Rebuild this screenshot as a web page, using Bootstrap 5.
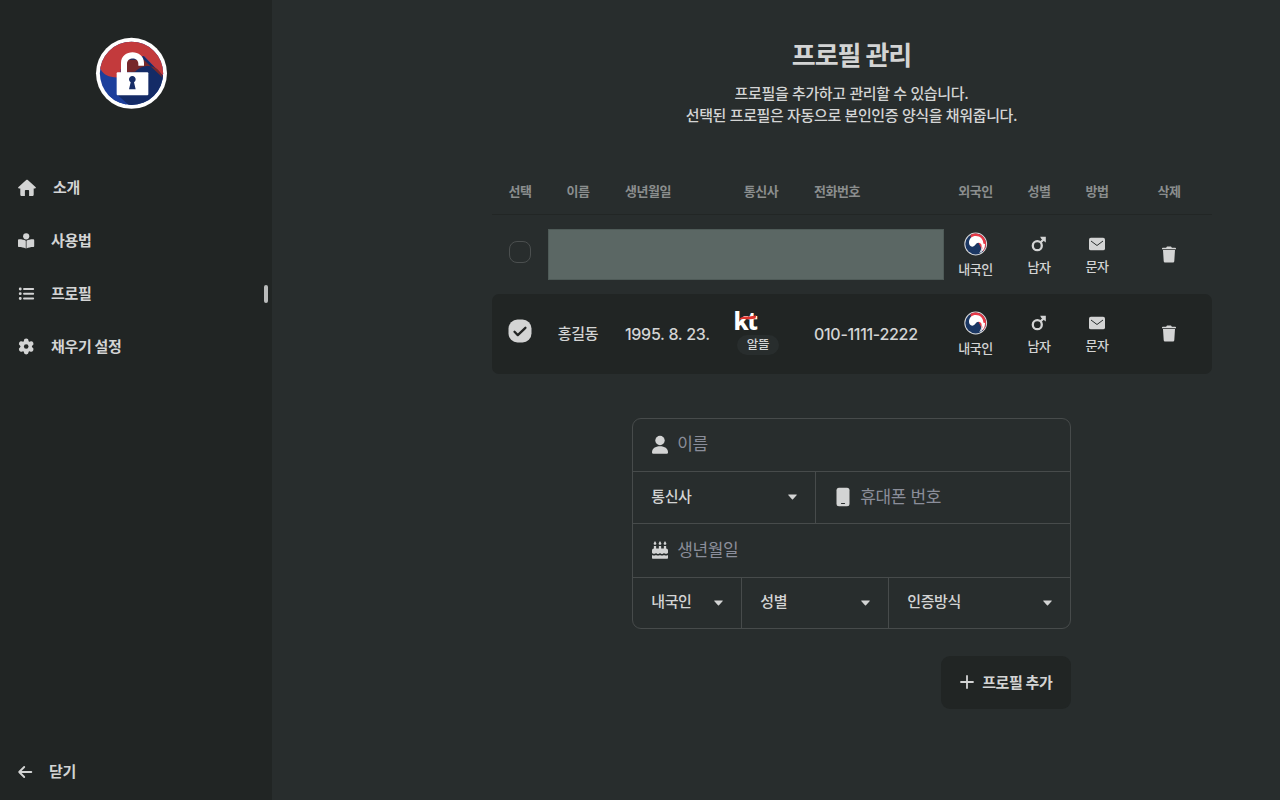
<!DOCTYPE html>
<html lang="ko" data-bs-theme="dark">
<head>
<meta charset="utf-8">
<meta name="viewport" content="width=device-width, initial-scale=1">
<title>프로필 관리</title>
<link rel="stylesheet" href="https://cdn.jsdelivr.net/npm/bootstrap@5.3.0/dist/css/bootstrap.min.css">
<style>
:root{--side:#212524;--page:#282d2d;--ink:#d3d4d4;--line:#474b4b}
body{background:var(--page);color:var(--ink);font-family:Inter,"Noto Sans CJK KR",sans-serif;font-size:15px;letter-spacing:-.25px}
svg{display:block;flex:none}
.sidebar{width:272px;background:var(--side)}
.logo{margin:28px 0 0 86px}
.side-nav{margin-top:41px}
.side-nav .nav-link,.close-link{height:53px;padding:0 4px 0 16px;color:var(--ink);font-weight:700;letter-spacing:-.35px;gap:13px}
.side-nav span,.close-link span{padding-top:2px}
.marker{width:4px;height:18px;border-radius:2px;background:#b9bbbb}
.content{padding-left:152px}
h1{font-size:26px;font-weight:700;letter-spacing:-1.05px;line-height:30px;margin:41px 1px 12px 0;color:var(--ink)}
.intro{line-height:22px;margin:0 1px 0 0;font-weight:500;letter-spacing:-.36px}
.profiles{width:720px;margin:46px 0 0;table-layout:fixed;border-collapse:separate;border-spacing:0}
.profiles th{height:42px;padding:0 0 3px;font-size:13px;font-weight:700;letter-spacing:-.45px;color:#8b8e8e;vertical-align:middle;border-bottom:1px solid #222625}
.profiles td{height:79.3px;padding:0;vertical-align:middle}
.picked td{background:var(--side)}
.picked td:first-child{border-radius:7px 0 0 7px}
.picked td:last-child{border-radius:0 7px 7px 0}
.profiles .ps{padding-left:17px}
.profiles .person{font-weight:500}
.profiles .digits{font-size:16px;font-weight:500;letter-spacing:-.3px;padding-top:1px}
.hidden-data{width:395.5px;height:51px;margin-top:-1px;background:#5b6764;border:1px solid #4f5b58}
.tick{width:22px;height:22px;border:1px solid #4b4f4f;border-radius:8px;margin:-5px auto 0}
.profiles .tagline{font-size:13px;line-height:18px;font-weight:500;letter-spacing:-.5px}
.profiles .low{padding:2px 0 0}
.low svg{margin-bottom:6px}
.kt{position:relative;width:24px;height:20px;margin:-2px 0 0 10px;font:800 24px/20px "Noto Sans",sans-serif;letter-spacing:-1.5px;color:#fff}
.kt svg{position:absolute;left:6px;top:3px}
.chip{width:42px;height:20px;border-radius:10px;background:var(--page);margin:4px 0 0 14px;font-size:12.5px;line-height:20px;letter-spacing:-.2px;text-align:center;font-weight:500}
.profile-form{width:439px;height:211px;margin-top:44px;border:1.4px solid var(--line);border-radius:9px;display:grid;grid-template-rows:52px 52px 54px 1fr}
.profile-form>div+div{border-top:1px solid var(--line)}
.field{padding:0 18px;min-width:0}
.field+.field{border-left:1px solid var(--line)}
.field input{background:none;border:0;outline:0;padding:0;color:var(--ink);font-size:17px;letter-spacing:-.4px;width:100%;min-width:0;margin-left:8px;height:30px;margin-top:-1px}
.field input::placeholder{color:#8b8e9a;opacity:1}
.pick{font-weight:500;letter-spacing:-.4px}
.add{width:130px;height:53px;margin-top:27px;border-radius:9px;background:var(--side);color:var(--ink);font-size:15px;font-weight:700;letter-spacing:-.4px;border:0;gap:8px}
.add span{padding-top:2px}
</style>
</head>
<body>
<svg width="0" height="0" class="position-absolute" aria-hidden="true">
<defs>
<symbol id="taegeuk" viewBox="0 0 24 24"><circle cx="11.700" cy="12" r="11.400" fill="#d9dadb"/><circle cx="11.700" cy="12" r="10.400" fill="#1b3763"/><path d="M6.500 3A10.400 10.400 0 0 1 19 19.400L14 10 7 6Z" fill="#e63946"/><path d="M5 10.800C5 6.500 8 4 11.800 4c4.700 0 7.600 3.400 7.600 7.800 0 3.500-1.500 6.300-3.600 8.400C18.500 16 18.500 10.800 14.500 10.800c-2.900 0-3.300 3.900-6.300 3.900C6.400 14.700 5 13 5 10.800Z" fill="#fff"/><path d="M18.500 11.500c1.200 3.500 0 6.500-3.500 9.300l2-.5c3-2.200 4-4.800 4-8.300Z" fill="#fff"/></symbol>
<symbol id="male" viewBox="0 0 16 16"><g fill="none" stroke="#d3d4d4" stroke-width="2.300"><circle cx="6.300" cy="9.700" r="4.500"/><path d="m9.500 6.500 3.500-3.500"/></g><path d="M9.200.8h5.600v5.600l-2-1.300-2.700-2.600Z" fill="#d3d4d4"/></symbol>
<symbol id="mail" viewBox="0 0 16 14"><rect y=".7" width="16" height="12.600" rx="1.900" fill="#d3d4d4"/><path d="m2 4 6 4.500L14 4" fill="none" stroke="#292e2e" stroke-width="1"/></symbol>
<symbol id="trash" viewBox="0 0 14 17"><path d="M.8 1.800h3.300L5 .5h4l.9 1.300h3.300c.5 0 .8.300.8.700v.7H0v-.7c0-.4.300-.7.800-.7ZM1 4h12l-.7 11c-.1 1-.7 1.500-1.600 1.500H3.300c-.9 0-1.500-.5-1.600-1.500Z" fill="#d3d4d4"/></symbol>
<symbol id="caret" viewBox="0 0 9 6"><path d="M.7.5h7.600c.5 0 .6.400.3.700L5 5.200c-.3.300-.7.300-1 0L.4 1.200C.1.900.2.500.7.500Z" fill="#d3d4d4"/></symbol>
</defs>
</svg>

<div class="d-flex vh-100 overflow-hidden">
  <aside class="sidebar d-flex flex-column">
    <svg class="logo" width="92" height="92" viewBox="0 0 276 276">
      <defs><clipPath id="disc"><circle cx="136.500" cy="136" r="95"/></clipPath></defs>
      <circle cx="136.500" cy="136" r="106.500" fill="#fff"/>
      <g clip-path="url(#disc)">
        <rect width="276" height="276" fill="#1d3f9c"/>
        <path d="M120 85h53l64 64v90h-100l-43-39 50-84Z" fill="#142b66"/>
        <path d="M30 118C54 40 91 30 136 30c53 0 100 34 106 92l-12 20-56-58-54 10-16 30-1 24C70 150 54 142 44 124Z" fill="#c33a3c"/>
        <path d="M120 95h53l58 55c-9-27-29-39-54-35-12 2-21 8-30 16l-27 2Z" fill="#76282b"/>
        <path d="m92 201 38 38H90l-34-43Z" fill="#1d3f9c"/>
      </g>
      <path d="M105 135v-30c0-43 69-43 69 0v8h-17v-6c0-21-34-21-34 0v28Z" fill="#fff"/>
      <rect x="92" y="133" width="95" height="69" rx="3" fill="#fff"/>
      <path d="M134 163a10 10 0 1 1 10 0l5 21h-20Z" fill="#172d67"/>
    </svg>
    <nav class="nav flex-column side-nav">
      <a class="nav-link d-flex align-items-center" href="#"><svg width="22" height="22" viewBox="0 0 22 22" fill="#d3d4d4"><path d="M10.200 3.100c.5-.5 1.100-.5 1.600 0l7.700 7c.8.700.3 1.300-.6 1.300h-1.200v6c0 1-.6 1.600-1.600 1.600h-3V14c0-.7-.4-1-1-1H9.900c-.6 0-1 .3-1 1v5h-3c-1 0-1.600-.6-1.600-1.600v-6H3.100c-.9 0-1.400-.6-.6-1.300Z"/></svg><span class="ps-1" style="margin-left:-2px">소개</span></a>
      <a class="nav-link d-flex align-items-center" href="#"><svg width="22" height="22" viewBox="0 0 22 22" fill="#d3d4d4"><circle cx="10.200" cy="6.300" r="3.100"/><path d="M2 10.300c0-.7.500-1 1.200-1 2.800 0 5 .5 6.600 1.500v7.600c-2.200-1-4.200-1.500-6.800-1.500-.6 0-1-.4-1-1Zm16.200 0c0-.7-.5-1-1.200-1-2.800 0-4.900.5-6.500 1.500v7.600c2.100-1 4.100-1.500 6.700-1.500.6 0 1-.4 1-1Z"/></svg><span>사용법</span></a>
      <a class="nav-link d-flex align-items-center" href="#"><svg width="22" height="22" viewBox="0 0 22 22" fill="none" stroke="#d3d4d4" stroke-linecap="round"><path stroke-width="1.900" d="M8 6h9.200M8 10.700h9.200M8 15.500h9.200"/><path stroke-width="2.800" d="M4.200 6h.1M4.200 10.700h.1M4.200 15.500h.1"/></svg><span>프로필</span><i class="marker ms-auto"></i></a>
      <a class="nav-link d-flex align-items-center" href="#"><svg width="22" height="22" viewBox="0 0 22 22"><g transform="translate(10.200 10.500)"><g stroke="#d3d4d4" stroke-width="4.800" stroke-linejoin="round" stroke-linecap="round"><path d="M0-5.600V5.600M-4.900-2.800 4.900 2.800M-4.900 2.800 4.900-2.800"/></g><circle r="5.700" fill="#d3d4d4"/><circle r="2.300" fill="#222524"/></g></svg><span>채우기 설정</span></a>
    </nav>
    <a class="close-link d-flex align-items-center mt-auto text-decoration-none" style="margin-bottom:2px" href="#"><svg width="20" height="22" viewBox="0 0 20 22" fill="none" stroke="#d3d4d4" stroke-width="1.900" stroke-linecap="round" stroke-linejoin="round"><path d="M15.300 11H3.200m5-5-5 5 5 5"/></svg><span>닫기</span></a>
  </aside>

  <main class="content flex-fill d-flex flex-column align-items-center">
    <h1>프로필 관리</h1>
    <p class="intro text-center">프로필을 추가하고 관리할 수 있습니다.<br>선택된 프로필은 자동으로 본인인증 양식을 채워줍니다.</p>

    <table class="profiles text-center">
      <colgroup><col style="width:56px"><col style="width:60px"><col style="width:115px"><col style="width:76px"><col style="width:142px"><col style="width:69px"><col style="width:58px"><col style="width:58px"><col style="width:86px"></colgroup>
      <thead><tr><th>선택</th><th>이름</th><th class="ps text-start">생년월일</th><th>통신사</th><th class="text-start" style="padding-left:15px">전화번호</th><th>외국인</th><th>성별</th><th>방법</th><th>삭제</th></tr></thead>
      <tbody>
        <tr>
          <td><div class="tick"></div></td>
          <td colspan="4"><div class="hidden-data"></div></td>
          <td class="tagline"><svg class="mx-auto mb-1" width="24" height="24"><use href="#taegeuk"/></svg>내국인</td>
          <td class="tagline low"><svg class="mx-auto" width="16" height="16"><use href="#male"/></svg>남자</td>
          <td class="tagline low"><svg class="mx-auto" width="16" height="14"><use href="#mail"/></svg>문자</td>
          <td><svg class="mx-auto" width="14" height="17"><use href="#trash"/></svg></td>
        </tr>
        <tr class="picked">
          <td><svg class="mx-auto" style="margin-top:-5px" width="24" height="24" viewBox="0 0 24 24"><rect x=".5" y=".5" width="23" height="23" rx="9" fill="#d3d4d4"/><path d="m6.500 12.800 3.300 3.300 7.600-7.300" fill="none" stroke="#222524" stroke-width="2.300" stroke-linecap="round" stroke-linejoin="round"/></svg></td>
          <td class="person">홍길동</td>
          <td class="ps digits text-start">1995. 8. 23.</td>
          <td><div class="kt">kt<svg width="18" height="7" viewBox="0 0 18 7"><path d="M.5 4.800C3.500 1.300 7 2.700 10 2.500c2.800-.1 4.500-.6 7.300-1.200L16.500 4.600C12 5.800 9 5 5.500 5 3.500 5 2 5.200.3 6Z" fill="#e0352f"/></svg></div><div class="chip">알뜰</div></td>
          <td class="digits text-start" style="padding-left:15px">010-1111-2222</td>
          <td class="tagline"><svg class="mx-auto mb-1" width="24" height="24"><use href="#taegeuk"/></svg>내국인</td>
          <td class="tagline low"><svg class="mx-auto" width="16" height="16"><use href="#male"/></svg>남자</td>
          <td class="tagline low"><svg class="mx-auto" width="16" height="14"><use href="#mail"/></svg>문자</td>
          <td><svg class="mx-auto" width="14" height="17"><use href="#trash"/></svg></td>
        </tr>
      </tbody>
    </table>

    <form class="d-flex flex-column align-items-end" style="margin-right:.4px">
      <div class="profile-form">
        <div class="field d-flex align-items-center"><svg width="18" height="20" viewBox="0 0 18 20" fill="#d3d4d4"><circle cx="9" cy="5.500" r="4.700"/><path d="M1 17.500c0-4 3.300-6.200 8-6.200s8 2.200 8 6.200c0 .8-.5 1.200-1.200 1.200H2.200c-.7 0-1.200-.4-1.200-1.200Z"/></svg><input placeholder="이름" aria-label="이름"></div>
        <div class="d-flex">
          <div class="field pick d-flex align-items-center justify-content-between flex-shrink-0" style="width:182px">통신사<svg width="9" height="6"><use href="#caret"/></svg></div>
          <div class="field d-flex align-items-center flex-fill"><svg width="18" height="20" viewBox="0 0 18 20"><rect x="2.500" y=".8" width="13" height="18.400" rx="2.500" fill="#d3d4d4"/><path d="M7.500 16.500h3" stroke="#292e2e" stroke-width="1.200" stroke-linecap="round"/></svg><input placeholder="휴대폰 번호" aria-label="휴대폰 번호"></div>
        </div>
        <div class="field d-flex align-items-center"><svg width="18" height="20" viewBox="0 0 18 20" fill="#d3d4d4"><path d="M4 6v4M9 6v4M14 6v4" stroke="#d3d4d4" stroke-width="2.300"/><path d="m4 1 1.300 2.200c.5 2-3.100 2-2.600 0Zm5 0 1.300 2.200c.5 2-3.100 2-2.600 0Zm5 0 1.300 2.200c.5 2-3.100 2-2.600 0Z"/><path d="M1 10.500c0-1.300.8-2 2-2h12c1.200 0 2 .7 2 2v2.200c-1 1.600-3 1.400-4 .3-1 1.300-3 1.300-4 0-1 1.300-3 1.300-4 0-1 1.100-3 1.300-4-.3ZM1 14.900c1.300.9 2.800.7 4 0 1.200.7 2.800.7 4 0 1.200.7 2.800.7 4 0 1.200.7 2.700.9 4 0v2.800c0 .7-.4 1.100-1 1.100H2c-.6 0-1-.4-1-1.100Z"/></svg><input placeholder="생년월일" aria-label="생년월일"></div>
        <div class="d-flex">
          <div class="field pick d-flex align-items-center justify-content-between" style="width:108px">내국인<svg width="9" height="6"><use href="#caret"/></svg></div>
          <div class="field pick d-flex align-items-center justify-content-between" style="width:147px">성별<svg width="9" height="6"><use href="#caret"/></svg></div>
          <div class="field pick d-flex align-items-center justify-content-between flex-fill">인증방식<svg width="9" height="6"><use href="#caret"/></svg></div>
        </div>
      </div>
      <button type="button" class="add d-flex align-items-center justify-content-center"><svg width="14" height="14" viewBox="0 0 14 14" fill="none" stroke="#d3d4d4" stroke-width="1.800" stroke-linecap="round"><path d="M7 1v12M1 7h12"/></svg><span>프로필 추가</span></button>
    </form>
  </main>
</div>
<script src="https://cdn.jsdelivr.net/npm/bootstrap@5.3.0/dist/js/bootstrap.bundle.min.js"></script>
</body>
</html>
